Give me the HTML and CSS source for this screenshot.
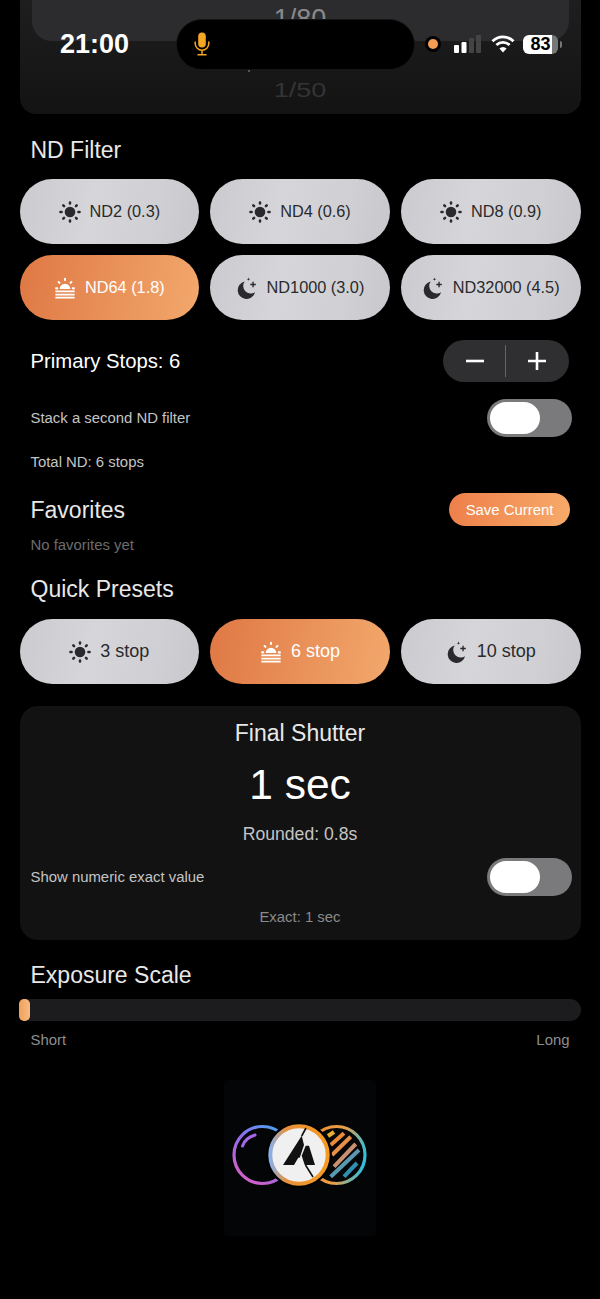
FILE: index.html
```html
<!DOCTYPE html>
<html lang="en">
<head>
  <meta charset="UTF-8">
  <title>ND Filter Calculator</title>
  <link rel="stylesheet" href="styles.css">
</head>
<body>

<svg class="sprite" width="0" height="0">
  <defs>
    <symbol id="sun" viewBox="0 0 24 24">
      <circle cx="12" cy="12" r="5.8" fill="currentColor"/>
      <path d="M12 1.6v1.2M12 21.2v1.2M1.6 12h1.2M21.2 12h1.2M4.7 4.7l.8.8M18.5 18.5l.8.8M4.7 19.3l.8-.8M18.5 5.5l.8-.8" stroke="currentColor" stroke-width="2.8" stroke-linecap="round"/>
    </symbol>
    <symbol id="sunset" viewBox="0 0 24 24">
      <path d="M6.2 13.2a5.8 5.8 0 0 1 11.6 0z" fill="currentColor"/>
      <path d="M12 1.8v1.6M5 5.4l1 1M19 5.4l-1 1M2.2 12.4h1.4M20.4 12.4h1.4" stroke="currentColor" stroke-width="2.2" stroke-linecap="round"/>
      <path d="M1.5 15.8h21M1.5 19.2h21M1.5 22.6h21" stroke="currentColor" stroke-width="1.9"/>
    </symbol>
    <symbol id="moon" viewBox="0 0 24 24">
      <path d="M9.5 5A9.6 9.6 0 1 0 20.8 16.6 8.2 8.2 0 0 1 9.5 5z" fill="currentColor"/>
      <path d="M13.6 .6l.5 1.3 1.3.5-1.3.5-.5 1.3-.5-1.3-1.3-.5 1.3-.5z" fill="currentColor"/>
      <path d="M18.6 5.2v6M15.6 8.2h6" stroke="currentColor" stroke-width="1.5"/>
    </symbol>
  </defs>
</svg>

<div class="wheel-card">
  <div class="wheel-band"></div>
  <div class="wheel-value wheel-top">1/80</div>
  <div class="wheel-value wheel-bottom">1/50</div>
</div>

<main class="content">
  <h2 class="title nd-title">ND Filter</h2>
  <div class="btn-grid">
    <button class="pill"><svg class="ico"><use href="#sun"/></svg>ND2 (0.3)</button>
    <button class="pill"><svg class="ico"><use href="#sun"/></svg>ND4 (0.6)</button>
    <button class="pill"><svg class="ico"><use href="#sun"/></svg>ND8 (0.9)</button>
    <button class="pill active"><svg class="ico"><use href="#sunset"/></svg>ND64 (1.8)</button>
    <button class="pill"><svg class="ico"><use href="#moon"/></svg>ND1000 (3.0)</button>
    <button class="pill"><svg class="ico"><use href="#moon"/></svg>ND32000 (4.5)</button>
  </div>

  <div class="row stops-row">
    <span class="stops-label">Primary Stops: 6</span>
    <div class="stepper">
      <svg width="20" height="20" viewBox="0 0 20 20"><path d="M1 10h18" stroke="#fff" stroke-width="2.6"/></svg>
      <i></i>
      <svg width="20" height="20" viewBox="0 0 20 20"><path d="M1 10h18M10 1v18" stroke="#fff" stroke-width="2.6"/></svg>
    </div>
  </div>

  <div class="row stack-row">
    <span class="small">Stack a second ND filter</span>
    <div class="toggle"><span></span></div>
  </div>
  <p class="small total">Total ND: 6 stops</p>

  <div class="row fav-row">
    <h2 class="title">Favorites</h2>
    <button class="save">Save Current</button>
  </div>
  <p class="small muted no-fav">No favorites yet</p>

  <h2 class="title presets-title">Quick Presets</h2>
  <div class="btn-grid">
    <button class="pill wide"><svg class="ico"><use href="#sun"/></svg>3 stop</button>
    <button class="pill wide active"><svg class="ico"><use href="#sunset"/></svg>6 stop</button>
    <button class="pill wide"><svg class="ico"><use href="#moon"/></svg>10 stop</button>
  </div>

  <section class="final">
    <h3>Final Shutter</h3>
    <div class="final-value">1 sec</div>
    <div class="rounded">Rounded: 0.8s</div>
    <div class="row exact-row">
      <span class="small">Show numeric exact value</span>
      <div class="toggle"><span></span></div>
    </div>
    <div class="small exact">Exact: 1 sec</div>
  </section>

  <h2 class="title scale-title">Exposure Scale</h2>
  <div class="track"><div class="thumb"></div></div>
  <div class="row scale-labels"><span>Short</span><span>Long</span></div>

  <div class="logo">
    <svg width="152" height="156" viewBox="0 0 152 156" fill="none">
      <defs>
        <linearGradient id="lensA" x1="1" y1="0" x2="0.3" y2="1">
          <stop offset="0" stop-color="#35b5f0"/><stop offset="0.5" stop-color="#8f6cf0"/><stop offset="1" stop-color="#d060c8"/>
        </linearGradient>
        <linearGradient id="lensB" x1="0" y1="0.4" x2="1" y2="0.6">
          <stop offset="0" stop-color="#f08a2a"/><stop offset="0.55" stop-color="#e8a04a"/><stop offset="1" stop-color="#2cc0de"/>
        </linearGradient>
        <linearGradient id="lensC" x1="0" y1="0.5" x2="1" y2="0.5">
          <stop offset="0" stop-color="#8ab0e8"/><stop offset="0.28" stop-color="#e8903a"/><stop offset="1" stop-color="#f59a20"/>
        </linearGradient>
        <clipPath id="stripes"><circle cx="112.5" cy="75" r="26"/></clipPath>
      </defs>
      <circle cx="38.5" cy="75" r="28.5" stroke="url(#lensA)" stroke-width="3.2"/>
      <path d="M18.5 66Q21 58 31 55" stroke="#a867e8" stroke-width="3" stroke-linecap="round"/>
      <circle cx="112.5" cy="75" r="28.5" stroke="url(#lensB)" stroke-width="3.2"/>
      <g clip-path="url(#stripes)" stroke-width="4">
        <path d="M104 56l6-4" stroke="#e8b030"/>
        <path d="M106.7 65L120 53.3" stroke="#e88a3a"/>
        <path d="M108 75L126.7 56.7" stroke="#e88f4a"/>
        <path d="M110 86.7L131.7 64" stroke="#c89070"/>
        <path d="M106.7 96.7L135 70" stroke="#5a98b0"/>
        <path d="M120 96.7L133 83" stroke="#2f90b0"/>
      </g>
      <circle cx="75" cy="75" r="33" fill="#000"/>
      <circle cx="75" cy="75" r="28.7" fill="#f0f0f0" stroke="url(#lensC)" stroke-width="4"/>
      <path d="M77.7 55.7L59 85h11l4.3-7.3h1.4L80 65z" fill="#111"/>
      <path d="M81.7 65.7H85L91 85H80.7L77.7 75.7z" fill="#111"/>
      <path d="M82 48L77.7 56M81.5 85L89 97" stroke="#111" stroke-width="1.6"/>
    </svg>
  </div>
</main>

<div class="status-bar">
  <span class="clock">21:00</span>
  <div class="island">
    <svg width="16" height="24" viewBox="0 0 16 24" fill="none" stroke="#f5a623" stroke-width="1.5">
      <rect x="4.2" y="0.5" width="7.6" height="15" rx="3.8" fill="#f5a623" stroke="none"/>
      <path d="M1.2 9.5v2a6.8 6.8 0 0 0 13.6 0v-2M8 18.3v4.2M3.5 22.8h9"/>
    </svg>
    <span class="island-dot"></span>
  </div>
  <span class="rec-dot"></span>
  <svg class="signal" width="29" height="18" viewBox="0 0 29 18">
    <rect x="0" y="10" width="5" height="8" rx="1" fill="#fff"/>
    <rect x="7.5" y="7" width="5" height="11" rx="1" fill="#fff"/>
    <rect x="15" y="3" width="5" height="15" rx="1" fill="#444"/>
    <rect x="22" y="0" width="5" height="18" rx="1" fill="#444"/>
  </svg>
  <svg class="wifi" width="24" height="18" viewBox="0 0 24 18" fill="none" stroke="#fff" stroke-width="2.8">
    <path d="M1.5 6.2a15 15 0 0 1 21 0M5.4 10a9.6 9.6 0 0 1 13.2 0"/>
    <path d="M12 17.5l-3.6-4a5 5 0 0 1 7.2 0z" fill="#fff" stroke="none"/>
  </svg>
  <div class="battery"><span>83</span></div>
</div>

</body>
</html>
```

FILE: styles.css
```css
* {
  box-sizing: border-box;
}
body {
  margin: 0;
  background: #000;
  color: #fff;
  font-family: "Liberation Sans", Arial, sans-serif;
  height: 1299px;
  overflow: hidden;
  position: relative;
}
.sprite {
  position: absolute;
}
h2, h3, p {
  margin: 0;
  font-weight: normal;
}

/* status bar lies over the page */
.status-bar {
  position: absolute;
  top: 0;
  left: 0;
  width: 600px;
  height: 88px;
}
.clock {
  position: absolute;
  left: 60px;
  top: 29px;
  font-size: 27px;
  line-height: 30px;
  font-weight: bold;
}
.island {
  position: absolute;
  left: 176px;
  top: 19px;
  width: 239px;
  height: 51px;
  background: #000;
  border: 1px solid #161616;
  border-radius: 26px;
  padding: 12px 0 0 17px;
  display: flex;
}
.island-dot {
  position: absolute;
  left: 71px;
  top: 50px;
  width: 2px;
  height: 2px;
  background: #555;
}
.rec-dot {
  position: absolute;
  left: 428px;
  top: 39px;
  width: 10px;
  height: 10px;
  border-radius: 50%;
  background: #f59c54;
  box-shadow: 0 0 0 3px #000;
}
.signal {
  position: absolute;
  left: 454px;
  top: 35px;
}
.wifi {
  position: absolute;
  left: 491px;
  top: 35px;
}
.battery {
  position: absolute;
  left: 523px;
  top: 35px;
  width: 35px;
  height: 19px;
  border-radius: 6px;
  background: linear-gradient(90deg, #fff 83%, #777 83%);
  color: #000;
  font-size: 18px;
  line-height: 19px;
  font-weight: bold;
  text-align: center;
}
.battery::after {
  content: "";
  position: absolute;
  left: 37px;
  top: 6px;
  width: 2px;
  height: 7px;
  border-radius: 0 2px 2px 0;
  background: #777;
}

/* shutter wheel, cut off by the top of the window */
.wheel-card {
  height: 114px;
  margin: 0 19.5px;
  background: linear-gradient(180deg, #1e1e1e, #131313);
  border-radius: 0 0 16px 16px;
  position: relative;
  overflow: hidden;
}
.wheel-band {
  position: absolute;
  left: 12px;
  right: 12px;
  top: -40px;
  height: 81px;
  background: #2c2c2e;
  border-radius: 20px;
}
.wheel-value {
  position: absolute;
  left: 0;
  right: 0;
  text-align: center;
  font-size: 27px;
  line-height: 30px;
}
.wheel-top {
  top: 4px;
  color: #8a8a8c;
}
.wheel-bottom {
  top: 75px;
  color: #343436;
  transform: scaleY(0.75);
}

.content {
  padding: 0 19.5px;
}
.title {
  font-size: 23px;
  line-height: 28px;
  color: #e8e8e8;
  padding-left: 11px;
}
.fav-row .title {
  padding-left: 0;
}
.nd-title {
  margin-top: 22px;
}
.btn-grid {
  display: grid;
  grid-template-columns: repeat(3, 1fr);
  gap: 11px;
  margin-top: 15px;
}
.pill {
  height: 65px;
  border: none;
  border-radius: 33px;
  background: linear-gradient(100deg, #cbcbcf 0%, #d6d6da 40%, #d0d0d4 75%, #c8c8cc 100%);
  color: #2a2a2c;
  font-family: inherit;
  font-size: 16.3px;
  padding: 0;
  display: flex;
  align-items: center;
  justify-content: center;
  gap: 9px;
}
.pill.wide {
  font-size: 18px;
}
.pill.active {
  background: linear-gradient(100deg, #df7844 0%, #f2a86c 100%);
  color: #fff;
}
.ico {
  width: 22px;
  height: 22px;
  flex: none;
}
.row {
  display: flex;
  align-items: center;
  justify-content: space-between;
  padding-left: 11px;
}
.stops-row {
  margin-top: 20px;
  padding-right: 12px;
}
.stops-label {
  font-size: 20.3px;
}
.stepper {
  width: 126px;
  height: 42px;
  background: #2f2f31;
  border-radius: 21px;
  display: flex;
  align-items: center;
  justify-content: space-between;
  padding: 0 22px;
}
.stepper i {
  width: 1px;
  height: 32px;
  background: #666;
}
.small {
  font-size: 14.9px;
  color: #c4c4c4;
}
.muted {
  color: #6c6c6c;
}
.stack-row {
  margin-top: 17px;
  padding-right: 9px;
}
.toggle {
  width: 85px;
  height: 38px;
  border-radius: 19px;
  background: #7a7a7c;
  padding: 3px;
}
.toggle span {
  display: block;
  width: 50px;
  height: 32px;
  border-radius: 16px;
  background: #fff;
}
.total {
  padding-left: 11px;
  margin-top: 16px;
  line-height: 18px;
}
.fav-row {
  margin-top: 22px;
  padding-right: 10.5px;
}
.save {
  width: 121px;
  height: 33px;
  border: none;
  border-radius: 17px;
  background: linear-gradient(100deg, #ee7f4a 0%, #f7ab6a 100%);
  color: #fff;
  font-family: inherit;
  font-size: 14.9px;
  padding: 0;
}
.no-fav {
  padding-left: 11px;
  margin-top: 10px;
  line-height: 18px;
}
.presets-title {
  margin-top: 21px;
}
.presets-title + .btn-grid {
  margin-top: 16px;
}
.final {
  margin-top: 22px;
  height: 234px;
  background: #121212;
  border-radius: 18px;
  text-align: center;
  padding-top: 14px;
}
.final h3 {
  font-size: 23px;
  line-height: 26px;
  color: #e8e8e8;
}
.final-value {
  font-size: 42.5px;
  line-height: 46px;
  margin-top: 16px;
}
.rounded {
  font-size: 17.6px;
  line-height: 20px;
  margin-top: 16px;
  color: #c4c4c4;
}
.exact-row {
  margin-top: 14px;
  padding-right: 9px;
  text-align: left;
}
.exact {
  margin-top: 13px;
  color: #8a8a8a;
}
.scale-title {
  margin-top: 21px;
}
.track {
  height: 22px;
  margin-top: 10px;
  background: #1c1c1e;
  border-radius: 11px;
}
.thumb {
  width: 11px;
  height: 22px;
  margin-left: -1px;
  border-radius: 5px;
  background: linear-gradient(90deg, #f2a05c, #f7bb80);
}
.scale-labels {
  margin-top: 11px;
  padding-right: 11px;
  font-size: 14.9px;
  color: #8e8e8e;
}
.logo {
  width: 152px;
  height: 156px;
  margin: 32px auto 0;
  background: #040507;
  border-radius: 4px;
}
.logo svg {
  display: block;
}
```
